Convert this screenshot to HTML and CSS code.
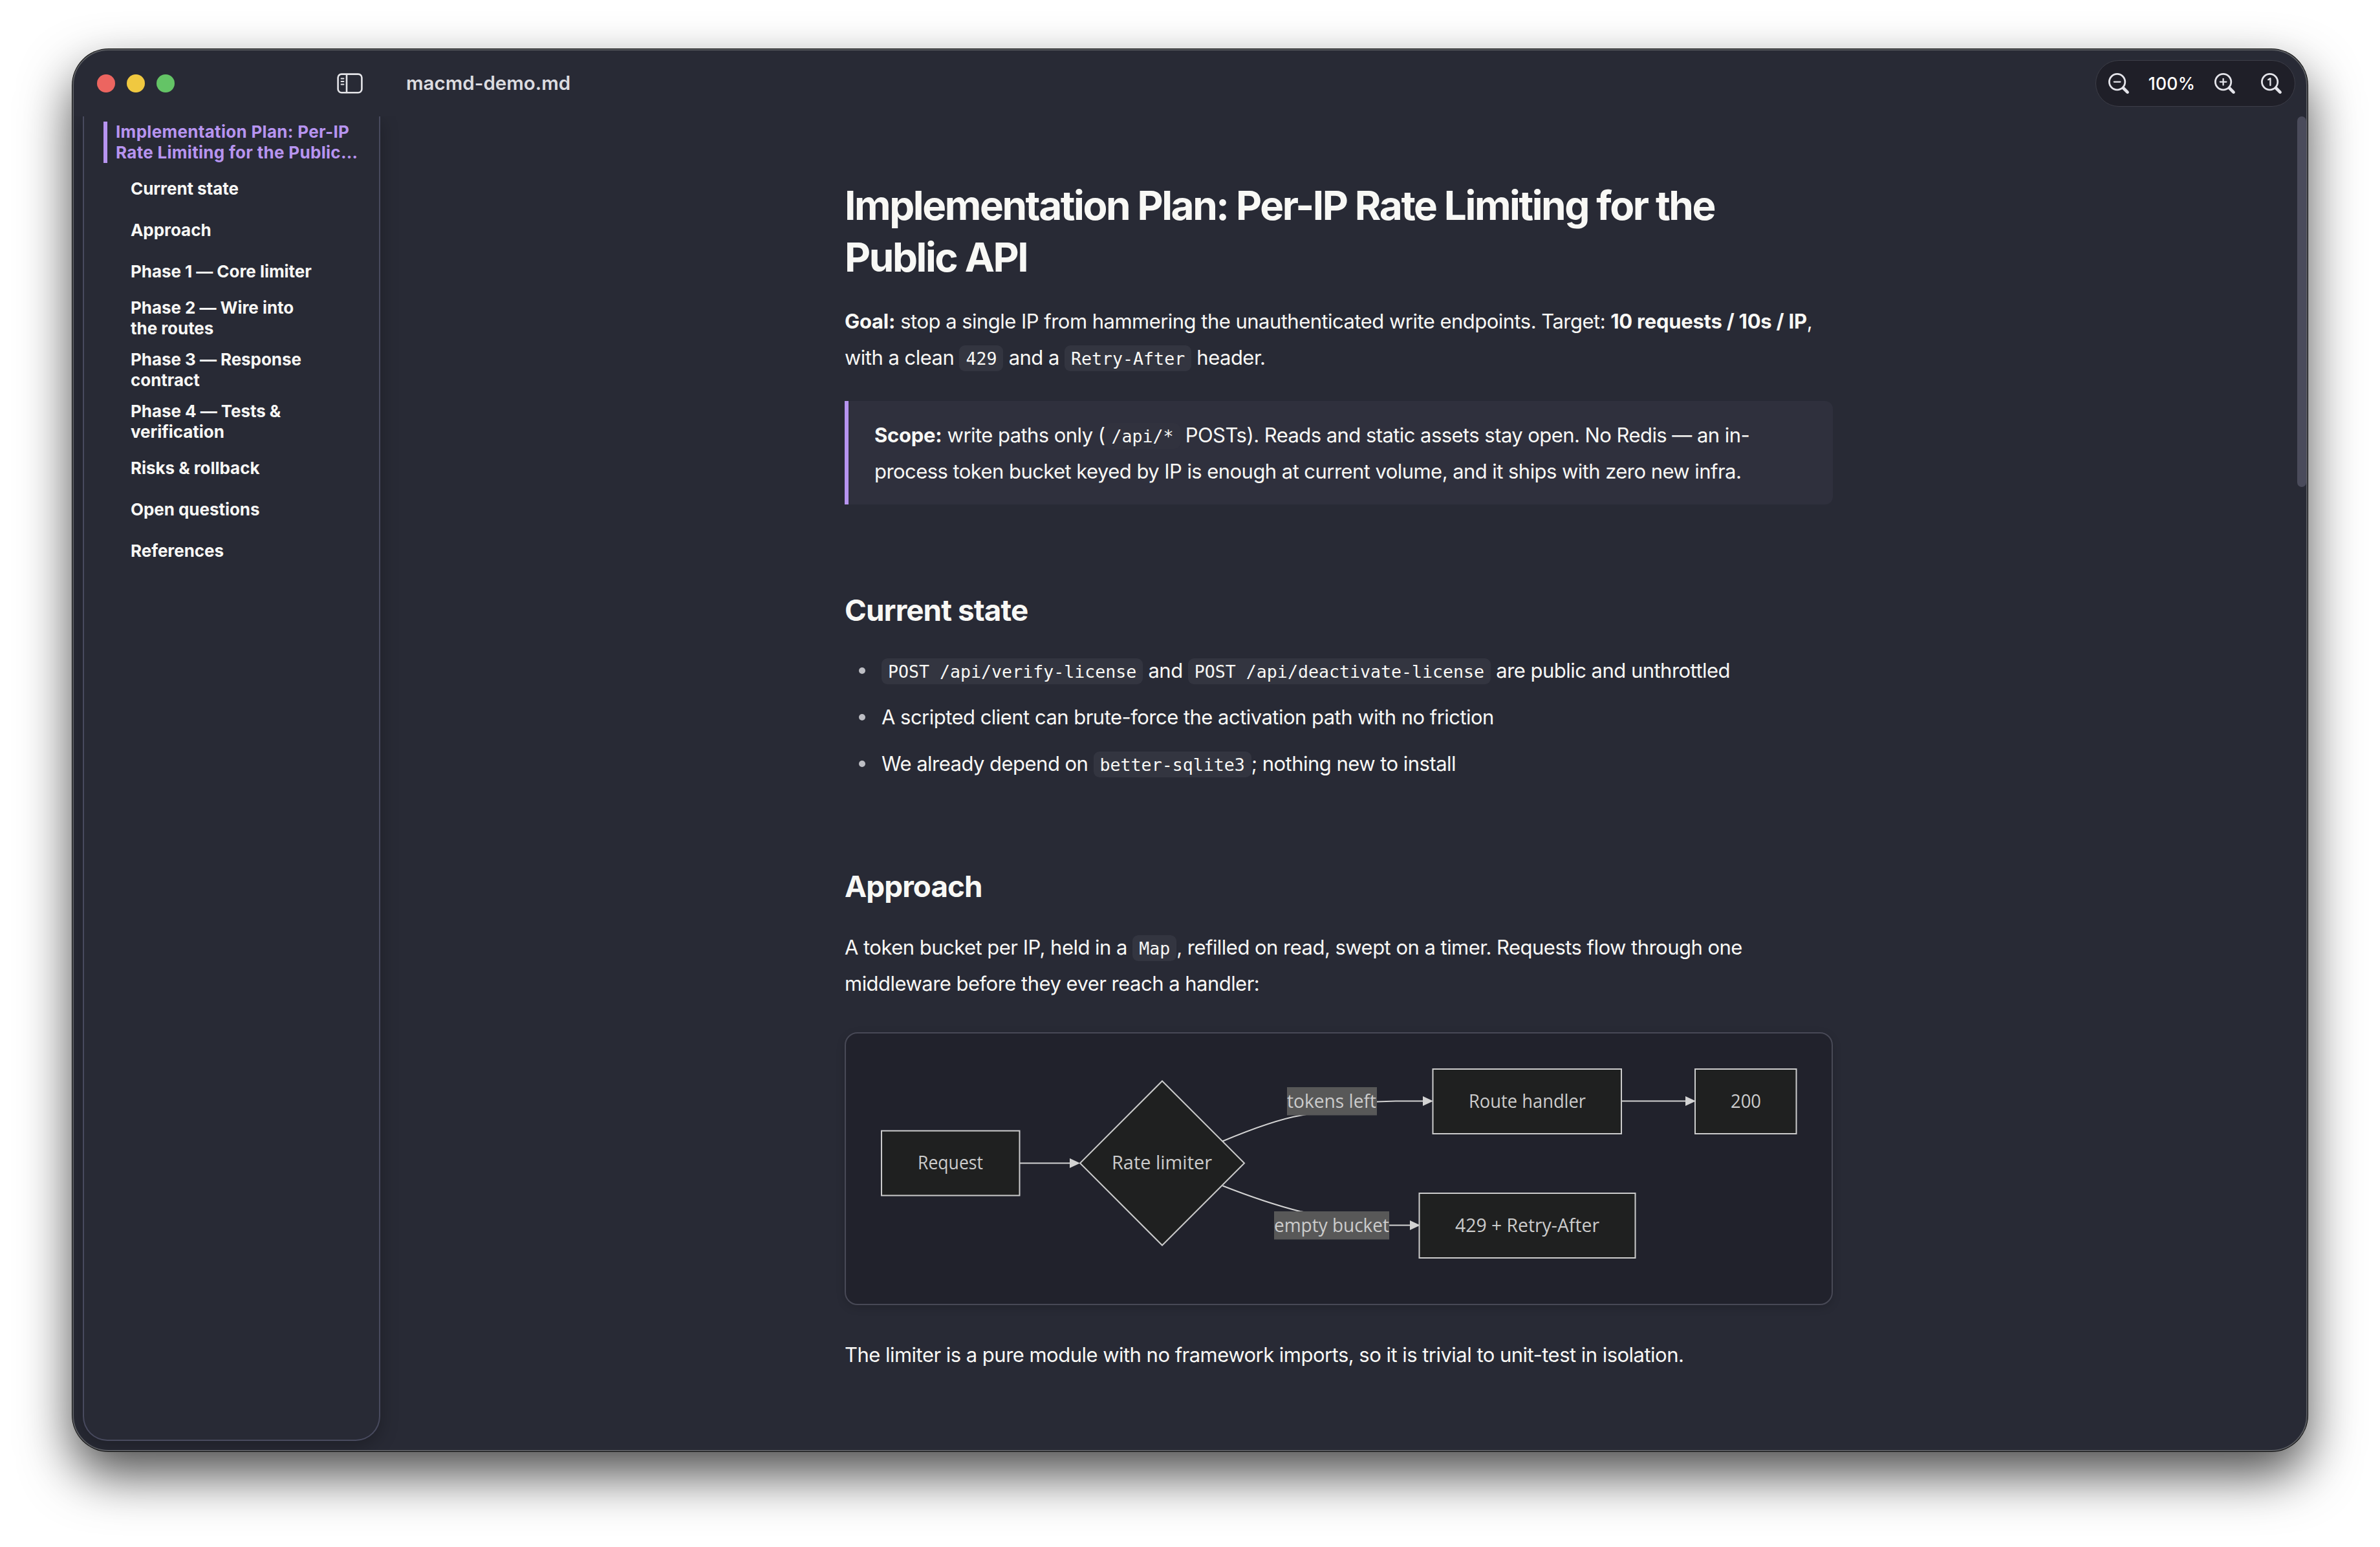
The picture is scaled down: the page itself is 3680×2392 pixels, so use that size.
FILE: index.html
```html
<!DOCTYPE html>
<html lang="en">
  <head>
    <meta charset="UTF-8" />
    <title>macmd-demo.md</title>
    <link rel="stylesheet" href="styles.css">
  </head>
  <body>
    <div class="window">
      <header class="titlebar">
        <div class="titlebar-left">
          <div class="lights">
            <span class="light red"></span>
            <span class="light yellow"></span>
            <span class="light green"></span>
          </div>
          <svg class="toggle" width="40" height="32" viewBox="0 0 40 32" fill="none" stroke="#e4e4e8" stroke-width="2.6" stroke-linecap="round">
            <rect x="1.6" y="1.6" width="36.8" height="28.6" rx="5.5" />
            <path d="M15 2v28" stroke-linecap="butt" />
            <path d="M6.6 8.6h3.8M6.6 13h3.8M6.6 17.4h3.8" stroke-width="2" />
          </svg>
        </div>
        <div class="filename">macmd-demo.md</div>
        <div class="zoom">
          <svg class="zoom-icon" width="34" height="34" viewBox="0 0 34 34" fill="none" stroke="#e4e4ea" stroke-linecap="round">
            <circle cx="14.6" cy="14.6" r="12.2" stroke-width="2.8" />
            <path d="M24 24l6.6 6.6" stroke-width="4.6" />
            <path d="M9.8 14.6h9.6" stroke-width="2.3" />
          </svg>
          <span class="zoom-value">100%</span>
          <svg class="zoom-icon plus" width="34" height="34" viewBox="0 0 34 34" fill="none" stroke="#e4e4ea" stroke-linecap="round">
            <circle cx="14.6" cy="14.6" r="12.2" stroke-width="2.8" />
            <path d="M24 24l6.6 6.6" stroke-width="4.6" />
            <path d="M9.8 14.6h9.6M14.6 9.8v9.6" stroke-width="2.3" />
          </svg>
          <svg class="zoom-icon" width="34" height="34" viewBox="0 0 34 34" fill="none" stroke="#e4e4ea" stroke-linecap="round">
            <circle cx="14.6" cy="14.6" r="12.2" stroke-width="2.8" />
            <path d="M24 24l6.6 6.6" stroke-width="4.6" />
            <path d="M12.2 11.2l3.2-1.9v10.6" stroke-width="2.3" stroke-linejoin="round" />
          </svg>
        </div>
      </header>

      <div class="body">
        <nav class="sidebar">
          <a class="item top active"><span>Implementation Plan: Per-IP<br>Rate Limiting for the Public…</span></a>
          <a class="item">Current state</a>
          <a class="item">Approach</a>
          <a class="item">Phase 1 — Core limiter</a>
          <a class="item two">Phase 2 — Wire into<br>the routes</a>
          <a class="item two">Phase 3 — Response<br>contract</a>
          <a class="item two">Phase 4 — Tests &amp;<br>verification</a>
          <a class="item">Risks &amp; rollback</a>
          <a class="item">Open questions</a>
          <a class="item">References</a>
        </nav>

        <main class="page">
          <article class="doc">
            <h1>Implementation Plan: Per-IP Rate Limiting for the<br>Public API</h1>
            <p><strong>Goal:</strong> stop a single IP from hammering the unauthenticated write endpoints. Target: <strong>10 requests / 10s / IP</strong>,<br>with a clean <code>429</code> and a <code>Retry-After</code> header.</p>

            <blockquote>
              <strong>Scope:</strong> write paths only (<code>/api/*</code> POSTs). Reads and static assets stay open. No Redis — an in-<br>process token bucket keyed by IP is enough at current volume, and it ships with zero new infra.
            </blockquote>

            <h2>Current state</h2>
            <ul>
              <li><code>POST /api/verify-license</code> and <code>POST /api/deactivate-license</code> are public and unthrottled</li>
              <li>A scripted client can brute-force the activation path with no friction</li>
              <li>We already depend on <code>better-sqlite3</code>; nothing new to install</li>
            </ul>

            <h2>Approach</h2>
            <p>A token bucket per IP, held in a <code>Map</code>, refilled on read, swept on a timer. Requests flow through one<br>middleware before they ever reach a handler:</p>

            <div class="diagram">
              <svg width="1524" height="418" viewBox="0 0 1524 418">
                <defs>
                  <marker id="arrow" markerUnits="userSpaceOnUse" markerWidth="16" markerHeight="16" refX="0" refY="8" orient="0">
                    <path class="head" d="M0 0.5L16 8L0 15.5z" />
                  </marker>
                </defs>
                <g class="edges">
                  <path d="M269 200.5H346" marker-end="url(#arrow)" />
                  <path d="M582.5 166.5Q660 134 704 126.5L821 105.6L850 104.5H892" marker-end="url(#arrow)" />
                  <path d="M582.5 235.5Q650 262 702 275L821 296.5H872" marker-end="url(#arrow)" />
                  <path d="M1200 104.5H1298" marker-end="url(#arrow)" />
                </g>
                <g class="nodes">
                  <rect x="55" y="150.5" width="213.5" height="100" />
                  <path d="M489 73.5L616 200.5L489 327.5L362 200.5z" />
                  <rect x="907.5" y="55" width="291.5" height="100" />
                  <rect x="1313" y="55" width="156.5" height="100" />
                  <rect x="886.5" y="247" width="334" height="100" />
                </g>
                <g class="labels">
                  <rect x="682" y="83" width="139" height="43.5" />
                  <rect x="662" y="275" width="178" height="43.5" />
                </g>
                <g class="texts">
                  <text x="111" y="210" textLength="101" lengthAdjust="spacingAndGlyphs">Request</text>
                  <text x="411" y="210" textLength="155" lengthAdjust="spacingAndGlyphs">Rate limiter</text>
                  <text x="682" y="114.5" textLength="138" lengthAdjust="spacingAndGlyphs">tokens left</text>
                  <text x="662" y="306.5" textLength="178" lengthAdjust="spacingAndGlyphs">empty bucket</text>
                  <text x="963" y="114.5" textLength="181" lengthAdjust="spacingAndGlyphs">Route handler</text>
                  <text x="1368" y="114.5" textLength="47" lengthAdjust="spacingAndGlyphs">200</text>
                  <text x="942" y="306.5" textLength="223" lengthAdjust="spacingAndGlyphs">429 + Retry-After</text>
                </g>
              </svg>
            </div>

            <p>The limiter is a pure module with no framework imports, so it is trivial to unit-test in isolation.</p>
          </article>
        </main>

        <div class="scrollbar"><div class="thumb"></div></div>
      </div>
    </div>
  </body>
</html>
```
FILE: styles.css
```css
* {
    box-sizing: border-box;
}
body {
    margin: 0;
    padding: 76px 112px;
    min-height: 2392px;
    background-color: #fff;
    font-family: Inter, "Liberation Sans", sans-serif;
    color: #f8f8f5;
}
.window {
    display: flex;
    flex-direction: column;
    width: 3456px;
    height: 2168px;
    background-color: #282a35;
    border: 2px solid #595b60;
    border-radius: 56px;
    overflow: hidden;
    box-shadow: 0 0 0 1px #0a0a0a, 0 36px 80px rgba(0, 0, 0, 0.7);
}

/* title bar */
.titlebar {
    display: flex;
    align-items: center;
    flex: none;
    height: 102px;
    padding: 0 17px 0 36px;
}
.titlebar-left {
    display: flex;
    align-items: center;
    justify-content: space-between;
    width: 411px;
}
.lights {
    display: flex;
    gap: 18px;
}
.light {
    width: 28px;
    height: 28px;
    border-radius: 50%;
}
.red {
    background-color: #ec6560;
}
.yellow {
    background-color: #f0c840;
}
.green {
    background-color: #64c466;
}
.filename {
    flex: 1;
    padding: 0 0 3px 67px;
    font-size: 29.5px;
    font-weight: 600;
    color: #dcdce0;
}
.zoom {
    display: flex;
    align-items: center;
    width: 309px;
    height: 72px;
    padding-left: 18px;
    background-color: #1f1f28;
    border: 1.5px solid #3d3e48;
    border-radius: 36px;
}
.zoom-icon {
    flex: none;
}
.zoom-value {
    width: 130px;
    text-align: center;
    font-size: 26.5px;
    font-weight: 500;
    letter-spacing: 0.3px;
    color: #fff;
}
.plus {
    margin-right: 38px;
}

/* outline */
.body {
    display: flex;
    flex: 1;
    min-height: 0;
    overflow: hidden;
}
.sidebar {
    flex: none;
    width: 460px;
    margin: 0 0 14px 14px;
    border: 2px solid #484a5e;
    border-top: none;
    border-radius: 0 0 38px 38px;
    box-shadow: 0 8px 28px rgba(0, 0, 0, 0.25);
    font-size: 26px;
    font-weight: 700;
    line-height: 32px;
    letter-spacing: -0.05px;
}
.item {
    display: block;
    padding: 16px 0 16px 72px;
    white-space: nowrap;
}
.item.two {
    padding: 8px 0 8px 72px;
}
.item.top {
    padding: 8px 0 8px 30px;
}
.active span {
    display: block;
    padding-left: 13px;
    border-left: 6px solid #b794f0;
    letter-spacing: 0.3px;
    color: #b794f0;
}

/* document */
.page {
    flex: 1;
    display: flex;
    justify-content: center;
}
.doc {
    width: 1528px;
    padding-top: 98px;
    font-size: 31px;
    line-height: 56px;
    letter-spacing: -0.017em;
    white-space: nowrap;
}
h1 {
    margin: 0 0 30px;
    font-size: 62px;
    font-weight: 700;
    line-height: 80px;
    letter-spacing: -0.039em;
}
h2 {
    margin: 136px 0 37px;
    font-size: 45.8px;
    font-weight: 700;
    line-height: 56px;
    letter-spacing: -0.02em;
}
p {
    margin: 0 0 -1px;
    padding-top: 1px;
}
strong {
    font-weight: 700;
    letter-spacing: -0.008em;
}
code {
    padding: 5px 10px 4px;
    background-color: #333540;
    border-radius: 9px;
    font-family: "DejaVu Sans Mono", monospace;
    font-size: 26.6px;
    line-height: 1;
    letter-spacing: 0;
}
blockquote {
    margin: 40px 0 0;
    padding: 25px 40px 23px;
    background-color: #2f303d;
    border-left: 6px solid #b794f0;
    border-radius: 0 12px 12px 0;
    letter-spacing: -0.018em;
}
blockquote code {
    background-color: #31323e;
}
ul {
    display: flex;
    flex-direction: column;
    gap: 16px;
    margin: 0 0 -2px;
    padding: 0;
    list-style: none;
}
li {
    padding-left: 22px;
}
li::before {
    content: "";
    display: inline-block;
    width: 10px;
    height: 10px;
    margin: 0 25px 6px 0;
    border-radius: 50%;
    background-color: #bdbec4;
}

/* flowchart */
.diagram {
    margin: 48px 0;
    height: 422px;
    background-color: #21222c;
    border: 2px solid #484956;
    border-radius: 20px;
    box-shadow: 0 4px 14px rgba(0, 0, 0, 0.15);
}
.diagram svg {
    display: block;
}
.edges path {
    fill: none;
    stroke: #d3d3d3;
    stroke-width: 2;
}
.head {
    fill: #d3d3d3;
}
.nodes {
    fill: #1f2020;
    stroke: #cccccc;
    stroke-width: 2;
}
.labels rect {
    fill: #585858;
}
.texts {
    fill: #cccccc;
    font-family: "Open Sans", sans-serif;
    font-size: 29px;
    letter-spacing: 0;
}

.scrollbar {
    flex: none;
    width: 14px;
}
.thumb {
    height: 573px;
    background-color: #4a4b5b;
    border-radius: 8px;
}
```
